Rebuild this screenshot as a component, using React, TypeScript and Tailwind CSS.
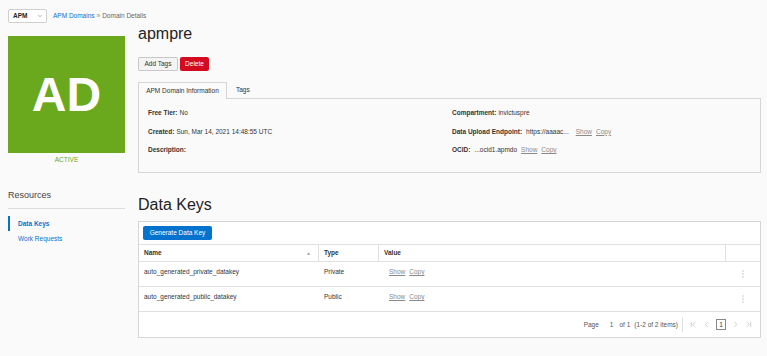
import { ChevronDown } from 'lucide-react';

const rows = [
  { name: 'auto_generated_private_datakey', type: 'Private' },
  { name: 'auto_generated_public_datakey', type: 'Public' },
];

function LinkPair() {
  return (
    <span className="flex gap-[4px] text-[#8a8a8a]">
      <span className="underline">Show</span>
      <span className="underline">Copy</span>
    </span>
  );
}

function PageIcon({ kind }: { kind: 'first' | 'prev' | 'next' | 'last' }) {
  return (
    <svg width="7" height="7" viewBox="0 0 8 8" fill="none" stroke="#c4c4c4" strokeWidth="0.9">
      {kind === 'first' && <><path d="M1.5 1v6" /><path d="M6 1.2 3 4l3 2.8" /></>}
      {kind === 'prev' && <path d="M5.5 1.2 2.5 4l3 2.8" />}
      {kind === 'next' && <path d="M2.5 1.2 5.5 4l-3 2.8" />}
      {kind === 'last' && <><path d="M6.5 1v6" /><path d="M2 1.2 5 4 2 6.8" /></>}
    </svg>
  );
}

export default function App() {
  return (
    <div className="h-[356px] w-full overflow-hidden bg-[#fafafa] font-['Liberation_Sans',Arial,sans-serif] text-[6.5px] leading-[8px] text-[#333]">
      {/* top bar */}
      <div className="flex items-center pl-[8px] pt-[9px]">
        <div className="flex h-[14px] w-[39px] items-center justify-between rounded-[2px] border border-[#cfcfcf] bg-white pl-[4px] pr-[3px]">
          <span className="font-bold text-[#222]">APM</span>
          <ChevronDown size={6} strokeWidth={2} className="text-[#666]" />
        </div>
        <div className="ml-[6px] flex items-center gap-[2px]">
          <span className="text-[#0572ce]">APM Domains</span>
          <span className="text-[#888]">»</span>
          <span className="text-[#666]">Domain Details</span>
        </div>
      </div>

      <div className="mt-[3px] flex pl-[8px]">
        {/* left column */}
        <div className="w-[117px] pt-[10px]">
          <div className="flex h-[117px] items-center justify-center bg-[#6aa81e]">
            <span className="text-[48px] font-bold leading-none text-white">AD</span>
          </div>
          <div className="mt-[3px] text-center text-[#6aa81e]">ACTIVE</div>
          <div className="mt-[26px] border-b border-[#dcdcdc] pb-[7px] text-[9px] leading-[11px] text-[#444]">Resources</div>
          <div className="mt-[7px]">
            <div className="flex h-[15px] items-center border-l-2 border-[#0572ce] pl-[8px] font-bold text-[#0572ce]">Data Keys</div>
            <div className="flex h-[15px] items-center pl-[10px] text-[#0572ce]">Work Requests</div>
          </div>
        </div>

        {/* right column */}
        <div className="ml-[13px] w-[623px]">
          <h1 className="text-[16px] leading-[16px] text-[#222]">apmpre</h1>
          <div className="mt-[15px] flex gap-[2px]">
            <button className="h-[14px] w-[40px] rounded-[2px] border border-[#c8c8c8] bg-[#f4f4f4] text-[6.5px] text-[#333]">Add Tags</button>
            <button className="h-[14px] w-[29px] rounded-[2px] bg-[#d40a1e] text-[6.5px] text-white">Delete</button>
          </div>

          {/* tabs */}
          <div className="mt-[10px] flex h-[17px] items-end">
            <div className="relative -mb-px flex h-[17px] w-[89px] items-center justify-center border border-b-0 border-[#d6d6d6] bg-[#fafafa] text-[#333]">
              APM Domain Information
            </div>
            <div className="flex h-[17px] items-center pl-[9px] text-[#333]">Tags</div>
          </div>
          <div className="h-[75px] border border-[#d6d6d6] bg-[#fafafa] pl-[9px] pt-[5px]">
            <div className="flex">
              <div className="w-[304px]">
                <div className="flex h-[18.5px] items-center gap-[2px]"><b>Free Tier:</b> No</div>
                <div className="flex h-[18.5px] items-center gap-[2px]"><b>Created:</b> Sun, Mar 14, 2021 14:48:55 UTC</div>
                <div className="flex h-[18.5px] items-center"><b>Description:</b></div>
              </div>
              <div>
                <div className="flex h-[18.5px] items-center gap-[2px]"><b>Compartment:</b> invictuspre</div>
                <div className="flex h-[18.5px] items-center">
                  <b>Data Upload Endpoint:</b>
                  <span className="ml-[4px] mr-[7px]">https://aaaac...</span>
                  <LinkPair />
                </div>
                <div className="flex h-[18.5px] items-center">
                  <b>OCID:</b>
                  <span className="ml-[4px] mr-[4px]">...ocid1.apmdo</span>
                  <LinkPair />
                </div>
              </div>
            </div>
          </div>

          <h2 className="mt-[24px] text-[16px] leading-[16px] text-[#222]">Data Keys</h2>
          <div className="mt-[8px] border border-[#d6d6d6] bg-white">
            <div className="px-[4px] py-[4px]">
              <button className="h-[14px] w-[69px] rounded-[2px] bg-[#0572ce] text-[6.5px] text-white">Generate Data Key</button>
            </div>
            <div className="grid grid-cols-[180px_60px_347px_1fr]">
              <div className="flex h-[18px] items-center justify-between border-y border-r border-[#e0e0e0] pl-[5px] pr-[7px] font-bold">
                <span>Name</span>
                <span className="text-[5px] text-[#aaa]">▲</span>
              </div>
              <div className="flex h-[18px] items-center border-y border-r border-[#e0e0e0] pl-[5px] font-bold">Type</div>
              <div className="flex h-[18px] items-center border-y border-r border-[#e0e0e0] pl-[5px] font-bold">Value</div>
              <div className="h-[18px] border-y border-[#e0e0e0]" />
              {rows.map((r) => (
                <div key={r.name} className="contents">
                  <div className="h-[25px] border-b border-[#e0e0e0] pl-[5px] pt-[6px]">{r.name}</div>
                  <div className="h-[25px] border-b border-[#e0e0e0] pl-[5px] pt-[6px]">{r.type}</div>
                  <div className="h-[25px] border-b border-[#e0e0e0] pl-[10px] pt-[6px]"><LinkPair /></div>
                  <div className="flex h-[25px] justify-center border-b border-[#e0e0e0] pt-[8px]">
                    <svg width="2" height="8" viewBox="0 0 2 8" fill="#b5b5b5">
                      <circle cx="1" cy="1" r="0.7" />
                      <circle cx="1" cy="4" r="0.7" />
                      <circle cx="1" cy="7" r="0.7" />
                    </svg>
                  </div>
                </div>
              ))}
            </div>
            <div className="flex h-[25px] items-center justify-end pr-[8px] text-[#555]">
              <span>Page</span>
              <span className="ml-[11px]">1</span>
              <span className="ml-[6px]">of 1</span>
              <span className="ml-[4px]">(1-2 of 2 items)</span>
              <span className="ml-[4px] h-[14px] border-l border-[#e0e0e0]" />
              <span className="ml-[7px] flex items-center gap-[6px]">
                <PageIcon kind="first" />
                <PageIcon kind="prev" />
                <span className="flex h-[11px] w-[10px] items-center justify-center border border-[#888] text-[#333]">1</span>
                <PageIcon kind="next" />
                <PageIcon kind="last" />
              </span>
            </div>
          </div>
        </div>
      </div>
    </div>
  );
}
